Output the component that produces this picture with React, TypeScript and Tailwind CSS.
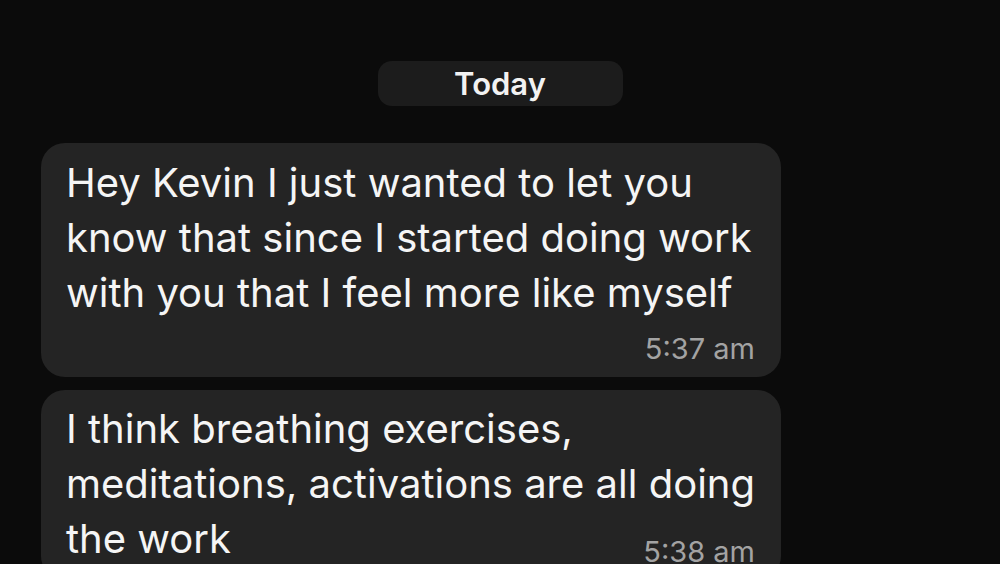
export default function App() {
  return (
    <div
      className="w-[1000px] h-[564px] overflow-hidden bg-[#0b0b0b] flex flex-col"
      style={{ fontFamily: "Inter, 'Noto Sans', sans-serif" }}
    >
      <div className="flex justify-center pt-[61px]">
        <div className="w-[245px] h-[45px] rounded-[14px] bg-[#1c1c1c] flex items-center justify-center text-[31px] font-semibold text-[#f2f2f2] pt-[1px]">
          Today
        </div>
      </div>

      <div className="pl-[41px] pt-[37px] flex flex-col gap-[13px]">
        <div className="w-[740px] rounded-[24px] bg-[#242424] pl-[25px] pr-[26px] pt-[12px] pb-[11px]">
          <p className="text-[40px] leading-[55px] text-[#f5f5f5] whitespace-nowrap">
            Hey Kevin I just wanted to let you
            <br />
            know that since I started doing work
            <br />
            with you that I feel more like myself
          </p>
          <div className="mt-[12px] text-right text-[29px] leading-[34px] text-[#a3a3a3]">5:37 am</div>
        </div>

        <div className="w-[740px] rounded-[24px] bg-[#242424] pl-[25px] pr-[26px] pt-[11px] pb-[11px]">
          <p className="text-[40px] leading-[55px] text-[#f5f5f5] whitespace-nowrap">
            I think breathing exercises,
            <br />
            meditations, activations are all doing
            <br />
            the work
          </p>
          <div className="-mt-[31px] text-right text-[29px] leading-[34px] text-[#a3a3a3]">5:38 am</div>
        </div>
      </div>
    </div>
  );
}
